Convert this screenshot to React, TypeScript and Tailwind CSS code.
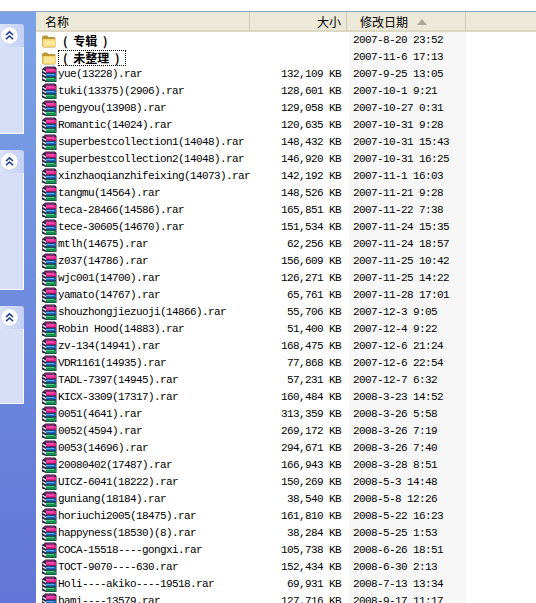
const files: [string, string, string][] = [
	['yue(13228).rar', '132,109', '2007-9-25 13:05'],
	['tuki(13375)(2906).rar', '128,601', '2007-10-1 9:21'],
	['pengyou(13908).rar', '129,058', '2007-10-27 0:31'],
	['Romantic(14024).rar', '120,635', '2007-10-31 9:28'],
	['superbestcollection1(14048).rar', '148,432', '2007-10-31 15:43'],
	['superbestcollection2(14048).rar', '146,920', '2007-10-31 16:25'],
	['xinzhaoqianzhifeixing(14073).rar', '142,192', '2007-11-1 16:03'],
	['tangmu(14564).rar', '148,526', '2007-11-21 9:28'],
	['teca-28466(14586).rar', '165,851', '2007-11-22 7:38'],
	['tece-30605(14670).rar', '151,534', '2007-11-24 15:35'],
	['mtlh(14675).rar', '62,256', '2007-11-24 18:57'],
	['z037(14786).rar', '156,609', '2007-11-25 10:42'],
	['wjc001(14700).rar', '126,271', '2007-11-25 14:22'],
	['yamato(14767).rar', '65,761', '2007-11-28 17:01'],
	['shouzhongjiezuoji(14866).rar', '55,706', '2007-12-3 9:05'],
	['Robin Hood(14883).rar', '51,400', '2007-12-4 9:22'],
	['zv-134(14941).rar', '168,475', '2007-12-6 21:24'],
	['VDR1161(14935).rar', '77,868', '2007-12-6 22:54'],
	['TADL-7397(14945).rar', '57,231', '2007-12-7 6:32'],
	['KICX-3309(17317).rar', '160,484', '2008-3-23 14:52'],
	['0051(4641).rar', '313,359', '2008-3-26 5:58'],
	['0052(4594).rar', '269,172', '2008-3-26 7:19'],
	['0053(14696).rar', '294,671', '2008-3-26 7:40'],
	['20080402(17487).rar', '166,943', '2008-3-28 8:51'],
	['UICZ-6041(18222).rar', '150,269', '2008-5-3 14:48'],
	['guniang(18184).rar', '38,540', '2008-5-8 12:26'],
	['horiuchi2005(18475).rar', '161,810', '2008-5-22 16:23'],
	['happyness(18530)(8).rar', '38,284', '2008-5-25 1:53'],
	['COCA-15518----gongxi.rar', '105,738', '2008-6-26 18:51'],
	['TOCT-9070----630.rar', '152,434', '2008-6-30 2:13'],
	['Holi----akiko----19518.rar', '69,931', '2008-7-13 13:34'],
	['bami----13579.rar', '127,716', '2008-9-17 11:17'],
]

const cellText = "font-['Liberation_Mono','Noto_Sans_CJK_SC',monospace] text-[11px] tracking-[-0.6px] text-black"

function FolderIcon() {
	return (
		<svg width="16" height="16" viewBox="0 0 16 16" className="shrink-0">
			<path d="M1 5 Q1 2.5 3 2.5 H6 L7.5 4 H13 Q14.5 4 14.5 5.5 V13 Q14.5 14.5 13 14.5 H3 Q1 14.5 1 12.5 Z" fill="#b9983a" />
			<path d="M1.5 12.5 V7.5 Q1.5 6 3 6 H14 Q15 6 15 7.5 V12.5 Q15 14 13.5 14 H3 Q1.5 14 1.5 12.5 Z" fill="#f6d873" />
			<path d="M3 7.5 H13.5 V12.5 H3 Z" fill="#fbe9a0" />
		</svg>
	)
}

function RarIcon() {
	return (
		<svg width="16" height="17" viewBox="0 0 16 17" className="shrink-0">
			{/* dark outline */}
			<path d="M1 3 L4.5 0.5 H14 L15.5 2 V16 H5 L1 14.5 Z" fill="#20203a" />
			{/* pages on the left */}
			<path d="M1.5 3.5 L5 5.5 V7 L1.5 5 Z" fill="#f2f2f6" />
			<path d="M1.5 7 L5 9 V10.5 L1.5 8.5 Z" fill="#f2f2f6" />
			<path d="M1.5 10.5 L5 12.5 V14.5 L1.5 12.5 Z" fill="#f2f2f6" />
			{/* magenta book */}
			<path d="M2.5 3 L5 1.2 H14 L13.5 3 Z" fill="#8a2a70" />
			<path d="M5 3 H15 V6.5 H5 Z" fill="#e8238f" />
			<path d="M5 3.5 H13 V4.5 H5 Z" fill="#ff6cb8" />
			{/* blue book */}
			<path d="M5 7.5 H15 V10.5 H5 Z" fill="#1f6cc4" />
			<path d="M5 8 H13 V9 H5 Z" fill="#58aaf0" />
			{/* green book */}
			<path d="M5 11.5 H15 V15.5 H5 Z" fill="#159050" />
			<path d="M5 12 H13 V13 H5 Z" fill="#4ccb83" />
		</svg>
	)
}

function Collapse() {
	return (
		<div className="ml-[1px] flex h-[17px] w-[17px] items-center justify-center rounded-full bg-white shadow-[0_0_1px_#8fa4dc]">
			<svg width="11" height="11" viewBox="0 0 11 11" fill="none" stroke="#1f3f8f" strokeWidth="1.6">
				<path d="M2 5 L5.5 1.8 L9 5" />
				<path d="M2 9.2 L5.5 6 L9 9.2" />
			</svg>
		</div>
	)
}

function SidePanel({ bodyClass }: { bodyClass: string }) {
	return (
		<div className="w-6">
			<div className="flex h-[23px] items-center rounded-tr-[3px] bg-gradient-to-r from-[#dbe3f9] to-[#c4d0f5]">
				<Collapse />
			</div>
			<div className={`border-r border-b border-white bg-[#d6dff7] ${bodyClass}`} />
		</div>
	)
}

function HeaderCell({ className, children }: { className: string; children?: React.ReactNode }) {
	return (
		<div
			className={`flex h-[20px] items-center border-r border-[#cfcbb5] font-['Noto_Sans_CJK_SC',sans-serif] text-[12px] text-black ${className}`}
		>
			{children}
		</div>
	)
}

function Row({ icon, name, size, date, focused, bold }: {
	icon: React.ReactNode
	name: string
	size?: string
	date: string
	focused?: boolean
	bold?: boolean
}) {
	return (
		<div className="flex h-[17px] items-center">
			<div className="flex w-[214px] shrink-0 items-center pl-[5px]">
				{icon}
				{bold ? (
					<span
						className={`ml-[1px] flex h-[16px] items-center whitespace-pre pl-[4px] font-['Noto_Sans_CJK_SC',sans-serif] text-[12px] font-bold text-black [word-spacing:3px] ${
							focused ? 'w-[68px] border border-dotted border-black' : 'border border-transparent'
						}`}
					>
						{name}
					</span>
				) : (
					<span className={`ml-[1px] whitespace-pre ${cellText}`}>{name}</span>
				)}
			</div>
			<div className={`w-[91px] shrink-0 whitespace-pre text-right ${cellText}`}>{size ? `${size} KB` : ''}</div>
			<div className="ml-[8px] flex h-[17px] w-[117px] shrink-0 items-center bg-[#f7f7f7] pl-[4px]">
				<span className={`whitespace-pre ${cellText}`}>{date}</span>
			</div>
		</div>
	)
}

export default function App() {
	return (
		<div className="h-[603px] w-[536px] overflow-hidden bg-white">
			<div className="h-[11px] bg-white" />
			<div className="flex h-[592px] border-t border-[#8ca4c4]">
				<div className="flex w-9 shrink-0 flex-col gap-[16px] bg-gradient-to-b from-[#7ba2e7] to-[#6375d6] pt-[12px]">
					<SidePanel bodyClass="h-[87px]" />
					<SidePanel bodyClass="h-[117px]" />
					<SidePanel bodyClass="h-[75px]" />
				</div>
				<div className="min-w-0 flex-1 bg-white">
					<div className="flex h-[20px] border-b-[2px] border-[#dcd8c4] bg-[#ece9d8]">
						<HeaderCell className="w-[214px] shrink-0 pl-[9px]">名称</HeaderCell>
						<HeaderCell className="w-[97px] shrink-0 justify-end pr-[5px]">大小</HeaderCell>
						<HeaderCell className="w-[119px] shrink-0 pl-[13px]">
							修改日期
							<svg width="10" height="6" viewBox="0 0 10 6" className="ml-[9px]">
								<path d="M5 0 L10 6 H0 Z" fill="#aca899" />
							</svg>
						</HeaderCell>
					</div>
					<Row icon={<FolderIcon />} name="( 专辑 )" date="2007-8-20 23:52" bold />
					<Row icon={<FolderIcon />} name="( 未整理 )" date="2007-11-6 17:13" bold focused />
					{files.map(([name, size, date]) => (
						<Row key={name} icon={<RarIcon />} name={name} size={size} date={date} />
					))}
				</div>
			</div>
		</div>
	)
}
